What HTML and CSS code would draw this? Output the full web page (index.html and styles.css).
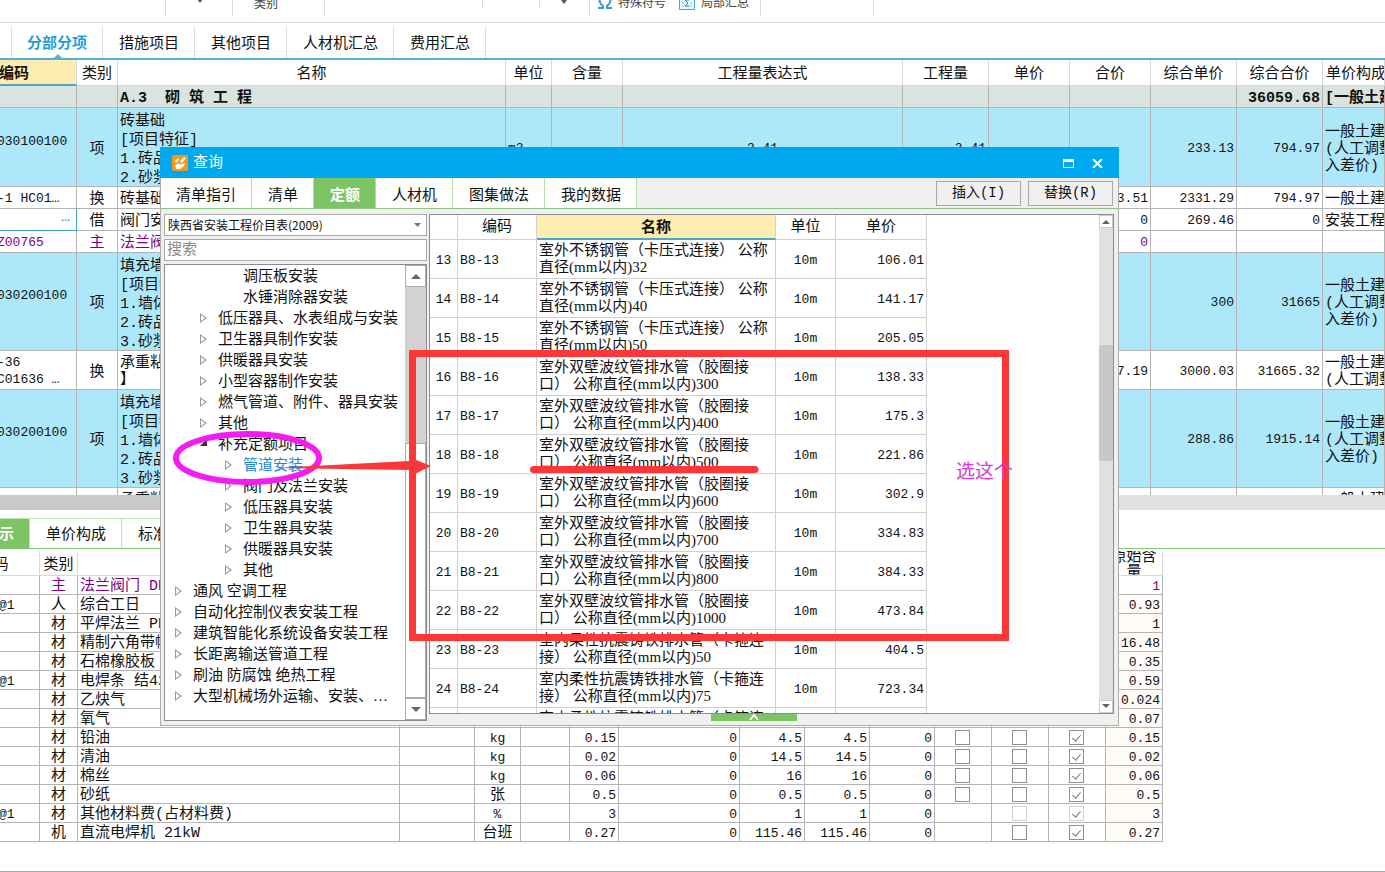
FILE: index.html
```html
<!DOCTYPE html>
<html lang="zh-CN">
<head>
<meta charset="utf-8">
<title>查询</title>
<link rel="stylesheet" href="styles.css">
</head>
<body>
<main class="app">
  <header class="ribbon">
    <div class="rib r1"></div>
    <div class="rib r2"><svg width="8" height="5" viewBox="0 0 8 5"><path d="M1 0h6L4 4z" fill="#555"/></svg></div>
    <div class="rib r3"><span>类别</span></div>
    <div class="rib r4 short"></div>
    <div class="rib r5 short"></div>
    <div class="rib r6"><svg width="8" height="5" viewBox="0 0 8 5"><path d="M1 1h6L4 5z" fill="#555"/></svg></div>
    <div class="rib r7">
      <svg width="14" height="16" viewBox="0 0 14 16"><path d="M0 14h5v-2C2.500 10 1.500 8 1.500 6a5.500 5 0 0 1 11 0c0 2-1 4-3.500 6v2h5" fill="none" stroke="#3b9bd0" stroke-width="2"/></svg>
      <span>特殊符号</span>
      <svg class="sum" width="16" height="16" viewBox="0 0 16 16"><path d="M.5.5h15v15H.5z" fill="#e9f8fc" stroke="#3aaecb"/><path d="M3 5h10M3 9h2M11 9h2M3 12h2M11 12h2" stroke="#7cc4dc"/><path d="M10 6H6l3 3-3 3h4" fill="none" stroke="#2b7fa8"/></svg>
      <span>局部汇总</span>
    </div>
    <div class="rib r8"></div>
  </header>

  <nav class="doctabs">
    <button class="active">分部分项</button><button>措施项目</button><button>其他项目</button><button>人材机汇总</button><button>费用汇总</button>
  </nav>

  <section class="upper">
    <table class="grid main">
      <colgroup><col class="m1"><col class="m2"><col class="m3"><col class="m4"><col class="m5"><col class="m6"><col class="m7"><col class="m8"><col class="m8"><col class="m7"><col class="m7"><col></colgroup>
      <thead><tr><th class="sel">编码</th><th>类别</th><th>名称</th><th>单位</th><th>含量</th><th>工程量表达式</th><th>工程量</th><th>单价</th><th>合价</th><th>综合单价</th><th>综合合价</th><th class="l">单价构成文件</th></tr></thead>
      <tbody>
      <tr class="group"><td></td><td></td><td class="pre">A.3  砌 筑 工 程</td><td></td><td></td><td></td><td></td><td></td><td></td><td></td><td class="r">36059.68</td><td>[一般土建工程]</td></tr>
      <tr class="item"><td class="code up">030100100</td><td class="c">项</td><td class="name"><div>砖基础<br>[项目特征]<br>1.砖品种<br>2.砂浆强度</div></td><td class="n">m3</td><td></td><td class="n c">3.41</td><td class="n r">3.41</td><td></td><td></td><td class="n r">233.13</td><td class="n r">794.97</td><td>一般土建工程<br>(人工调整计<br>入差价)</td></tr>
      <tr class="one"><td class="code">-1 HC01…</td><td class="c">换</td><td>砖基础</td><td></td><td></td><td></td><td></td><td></td><td class="n r">683.51</td><td class="n r">2331.29</td><td class="n r">794.97</td><td>一般土建工程</td></tr>
      <tr class="one"><td class="cur">…</td><td class="c">借</td><td>阀门安装</td><td></td><td></td><td></td><td></td><td></td><td class="n r">0</td><td class="n r">269.46</td><td class="n r">0</td><td>安装工程</td></tr>
      <tr class="one purple"><td class="code">Z00765</td><td class="c">主</td><td>法兰阀门</td><td></td><td></td><td></td><td></td><td></td><td class="n r">0</td><td></td><td></td><td></td></tr>
      <tr class="item"><td class="code up">030200100</td><td class="c">项</td><td class="name"><div>填充墙<br>[项目特征]<br>1.墙体类型<br>2.砖品种<br>3.砂浆强度</div></td><td></td><td></td><td></td><td></td><td></td><td></td><td class="n r">300</td><td class="n r">31665</td><td>一般土建工程<br>(人工调整计<br>入差价)</td></tr>
      <tr class="two"><td class="code">-36<br>C01636 …</td><td class="c">换</td><td>承重粘土砖<br>】</td><td></td><td></td><td></td><td></td><td></td><td class="n r">317.19</td><td class="n r">3000.03</td><td class="n r">31665.32</td><td>一般土建工程<br>(人工调整计</td></tr>
      <tr class="item"><td class="code up">030200100</td><td class="c">项</td><td class="name"><div>填充墙<br>[项目特征]<br>1.墙体类型<br>2.砖品种<br>3.砂浆强度</div></td><td></td><td></td><td></td><td></td><td></td><td></td><td class="n r">288.86</td><td class="n r">1915.14</td><td>一般土建工程<br>(人工调整计<br>入差价)</td></tr>
      <tr class="two"><td></td><td></td><td>承重粘土砖<br>】</td><td></td><td></td><td></td><td></td><td></td><td></td><td></td><td></td><td>一般土建工程<br>(人工调整计</td></tr>
      </tbody>
    </table>
  </section>
  <div class="hscroll"><div class="hthumb"></div></div>

  <section class="lower">
    <nav class="subtabs"><button class="active">工料机显示</button><button>单价构成</button><button>标准换算</button></nav>
    <table class="grid res">
      <colgroup><col class="b1"><col class="b2"><col class="b3"><col class="b4"><col class="b5"><col class="b6"><col class="b6"><col class="b7"><col class="b8"><col class="b8"><col class="b8"><col class="b9"><col class="b9"><col class="b9"><col class="b9"></colgroup>
      <thead><tr><th>编码</th><th>类别</th><th>名称</th><th></th><th></th><th></th><th></th><th></th><th></th><th></th><th></th><th></th><th></th><th></th><th class="wrap"><div>原始含量</div></th></tr></thead>
      <tbody>
      <tr class="purple"><td></td><td class="c">主</td><td>法兰阀门 DN50</td><td colspan="11"></td><td class="n r">1</td></tr>
      <tr><td class="code">@1</td><td class="c">人</td><td>综合工日</td><td colspan="11"></td><td class="n r q">0.93</td></tr>
      <tr><td></td><td class="c">材</td><td>平焊法兰 PN1.6</td><td colspan="11"></td><td class="n r q">1</td></tr>
      <tr><td></td><td class="c">材</td><td>精制六角带帽螺栓</td><td colspan="11"></td><td class="n r q">16.48</td></tr>
      <tr><td></td><td class="c">材</td><td>石棉橡胶板</td><td colspan="11"></td><td class="n r q">0.35</td></tr>
      <tr><td class="code">@1</td><td class="c">材</td><td>电焊条 结422</td><td colspan="11"></td><td class="n r q">0.59</td></tr>
      <tr><td></td><td class="c">材</td><td>乙炔气</td><td colspan="11"></td><td class="n r q">0.024</td></tr>
      <tr><td></td><td class="c">材</td><td>氧气</td><td></td><td></td><td></td><td></td><td></td><td></td><td></td><td></td><td></td><td></td><td></td><td class="n r q">0.07</td></tr>
      <tr><td></td><td class="c">材</td><td>铅油</td><td></td><td class="n c">kg</td><td></td><td class="n r">0.15</td><td class="n r">0</td><td class="n r">4.5</td><td class="n r">4.5</td><td class="n r">0</td><td class="k"><input type="checkbox" aria-label="铅油 选项一"></td><td class="k"><input type="checkbox" aria-label="铅油 选项二"></td><td class="k"><input type="checkbox" aria-label="铅油 选项三" checked></td><td class="n r q">0.15</td></tr>
      <tr><td></td><td class="c">材</td><td>清油</td><td></td><td class="n c">kg</td><td></td><td class="n r">0.02</td><td class="n r">0</td><td class="n r">14.5</td><td class="n r">14.5</td><td class="n r">0</td><td class="k"><input type="checkbox" aria-label="清油 选项一"></td><td class="k"><input type="checkbox" aria-label="清油 选项二"></td><td class="k"><input type="checkbox" aria-label="清油 选项三" checked></td><td class="n r q">0.02</td></tr>
      <tr><td></td><td class="c">材</td><td>棉丝</td><td></td><td class="n c">kg</td><td></td><td class="n r">0.06</td><td class="n r">0</td><td class="n r">16</td><td class="n r">16</td><td class="n r">0</td><td class="k"><input type="checkbox" aria-label="棉丝 选项一"></td><td class="k"><input type="checkbox" aria-label="棉丝 选项二"></td><td class="k"><input type="checkbox" aria-label="棉丝 选项三" checked></td><td class="n r q">0.06</td></tr>
      <tr><td></td><td class="c">材</td><td>砂纸</td><td></td><td class="c">张</td><td></td><td class="n r">0.5</td><td class="n r">0</td><td class="n r">0.5</td><td class="n r">0.5</td><td class="n r">0</td><td class="k"><input type="checkbox" aria-label="砂纸 选项一"></td><td class="k"><input type="checkbox" aria-label="砂纸 选项二"></td><td class="k"><input type="checkbox" aria-label="砂纸 选项三" checked></td><td class="n r q">0.5</td></tr>
      <tr><td class="code">@1</td><td class="c">材</td><td>其他材料费(占材料费)</td><td></td><td class="n c">%</td><td></td><td class="n r">3</td><td class="n r">0</td><td class="n r">1</td><td class="n r">1</td><td class="n r">0</td><td></td><td class="k"><input type="checkbox" aria-label="其他材料费 选项二" disabled></td><td class="k"><input type="checkbox" aria-label="其他材料费 选项三" checked disabled></td><td class="n r q">3</td></tr>
      <tr><td></td><td class="c">机</td><td>直流电焊机 21kW</td><td></td><td class="c">台班</td><td></td><td class="n r">0.27</td><td class="n r">0</td><td class="n r">115.46</td><td class="n r">115.46</td><td class="n r">0</td><td></td><td class="k"><input type="checkbox" aria-label="直流电焊机 选项二"></td><td class="k"><input type="checkbox" aria-label="直流电焊机 选项三" checked></td><td class="n r q">0.27</td></tr>
      </tbody>
    </table>
  </section>
</main>

<section class="dialog" role="dialog" aria-labelledby="dlg-title">
  <header class="titlebar">
    <svg width="16" height="16" viewBox="0 0 16 16"><rect width="16" height="16" rx="2" fill="#f39a1e"/><path d="M3 6l3-3 1 2-3 3zM8 6l4-4 2 1-4 5zM3 10l5-2-1 2 6-2-1 3-4 3-4 0z" fill="#fff"/></svg>
    <h1 id="dlg-title">查询</h1>
    <button aria-label="最大化"><svg width="11" height="9" viewBox="0 0 11 9"><path d="M.5.5h10v8H.5z" fill="none" stroke="#fff"/><path d="M0 0h11v3H0z" fill="#fff"/></svg></button>
    <button aria-label="关闭"><svg width="11" height="9" viewBox="0 0 11 9"><path d="M1 0l9 9M10 0L1 9" stroke="#fff" stroke-width="2"/></svg></button>
  </header>
  <div class="toolbar">
    <nav class="qtabs"><button>清单指引</button><button>清单</button><button class="active">定额</button><button>人材机</button><button>图集做法</button><button>我的数据</button></nav>
    <div class="acts"><button>插入(I)</button><button>替换(R)</button></div>
  </div>
  <div class="panes">
    <div class="side">
      <label class="combo"><select aria-label="定额库"><option>陕西省安装工程价目表(2009)</option></select><svg width="7" height="4" viewBox="0 0 7 4"><path d="M0 0h7L3.500 4z" fill="#777"/></svg></label>
      <input class="search" type="text" placeholder="搜索" aria-label="搜索">
      <div class="treebox">
        <ul class="tree">
          <li class="d3 leaf">调压板安装</li>
          <li class="d3 leaf">水锤消除器安装</li>
          <li class="d2">低压器具、水表组成与安装</li>
          <li class="d2">卫生器具制作安装</li>
          <li class="d2">供暖器具安装</li>
          <li class="d2">小型容器制作安装</li>
          <li class="d2">燃气管道、附件、器具安装</li>
          <li class="d2">其他</li>
          <li class="d2 open">补充定额项目</li>
          <li class="d3 picked">管道安装</li>
          <li class="d3">阀门及法兰安装</li>
          <li class="d3">低压器具安装</li>
          <li class="d3">卫生器具安装</li>
          <li class="d3">供暖器具安装</li>
          <li class="d3">其他</li>
          <li class="d1">通风 空调工程</li>
          <li class="d1">自动化控制仪表安装工程</li>
          <li class="d1">建筑智能化系统设备安装工程</li>
          <li class="d1">长距离输送管道工程</li>
          <li class="d1">刷油 防腐蚀 绝热工程</li>
          <li class="d1">大型机械场外运输、安装、…</li>
        </ul>
        <div class="vscroll wide"><button aria-label="向上"><svg width="10" height="5" viewBox="0 0 10 5"><path d="M0 5l5-5 5 5z" fill="#666"/></svg></button><i class="gap"></i><i class="thumb"></i><button aria-label="向下"><svg width="10" height="5" viewBox="0 0 10 5"><path d="M0 0l5 5 5-5z" fill="#666"/></svg></button></div>
      </div>
    </div>
    <div class="list">
      <div class="rows">
        <table class="grid quota">
          <colgroup><col class="q1"><col class="q2"><col class="q3"><col class="q4"><col class="q5"></colgroup>
          <thead><tr><th></th><th>编码</th><th class="sel">名称</th><th>单位</th><th>单价</th></tr></thead>
          <tbody>
          <tr><td class="n c">13</td><td class="n">B8-13</td><td class="mix">室外不锈钢管（卡压式连接） 公称<br>直径(mm以内)32</td><td class="n c">10m</td><td class="n r">106.01</td></tr>
          <tr><td class="n c">14</td><td class="n">B8-14</td><td class="mix">室外不锈钢管（卡压式连接） 公称<br>直径(mm以内)40</td><td class="n c">10m</td><td class="n r">141.17</td></tr>
          <tr><td class="n c">15</td><td class="n">B8-15</td><td class="mix">室外不锈钢管（卡压式连接） 公称<br>直径(mm以内)50</td><td class="n c">10m</td><td class="n r">205.05</td></tr>
          <tr><td class="n c">16</td><td class="n">B8-16</td><td class="mix">室外双壁波纹管排水管（胶圈接<br>口） 公称直径(mm以内)300</td><td class="n c">10m</td><td class="n r">138.33</td></tr>
          <tr><td class="n c">17</td><td class="n">B8-17</td><td class="mix">室外双壁波纹管排水管（胶圈接<br>口） 公称直径(mm以内)400</td><td class="n c">10m</td><td class="n r">175.3</td></tr>
          <tr><td class="n c">18</td><td class="n">B8-18</td><td class="mix">室外双壁波纹管排水管（胶圈接<br>口） 公称直径(mm以内)500</td><td class="n c">10m</td><td class="n r">221.86</td></tr>
          <tr><td class="n c">19</td><td class="n">B8-19</td><td class="mix">室外双壁波纹管排水管（胶圈接<br>口） 公称直径(mm以内)600</td><td class="n c">10m</td><td class="n r">302.9</td></tr>
          <tr><td class="n c">20</td><td class="n">B8-20</td><td class="mix">室外双壁波纹管排水管（胶圈接<br>口） 公称直径(mm以内)700</td><td class="n c">10m</td><td class="n r">334.83</td></tr>
          <tr><td class="n c">21</td><td class="n">B8-21</td><td class="mix">室外双壁波纹管排水管（胶圈接<br>口） 公称直径(mm以内)800</td><td class="n c">10m</td><td class="n r">384.33</td></tr>
          <tr><td class="n c">22</td><td class="n">B8-22</td><td class="mix">室外双壁波纹管排水管（胶圈接<br>口） 公称直径(mm以内)1000</td><td class="n c">10m</td><td class="n r">473.84</td></tr>
          <tr><td class="n c">23</td><td class="n">B8-23</td><td class="mix">室内柔性抗震铸铁排水管（卡箍连<br>接） 公称直径(mm以内)50</td><td class="n c">10m</td><td class="n r">404.5</td></tr>
          <tr><td class="n c">24</td><td class="n">B8-24</td><td class="mix">室内柔性抗震铸铁排水管（卡箍连<br>接） 公称直径(mm以内)75</td><td class="n c">10m</td><td class="n r">723.34</td></tr>
          <tr><td></td><td></td><td class="mix">室内柔性抗震铸铁排水管（卡箍连<br>接）</td><td></td><td></td></tr>
          </tbody>
        </table>
      </div>
      <div class="vscroll"><button aria-label="向上"><svg width="8" height="4" viewBox="0 0 8 4"><path d="M0 4l4-4 4 4z" fill="#666"/></svg></button><i class="gap"></i><i class="thumb"></i><i class="rest"></i><button aria-label="向下"><svg width="8" height="4" viewBox="0 0 8 4"><path d="M0 0l4 4 4-4z" fill="#666"/></svg></button></div>
    </div>
  </div>
  <button class="fold" aria-label="展开"><svg width="10" height="6" viewBox="0 0 10 6"><path d="M1 6l4-5 4 5" fill="none" stroke="#fff" stroke-width="2"/></svg></button>
</section>

<svg class="marks" width="1385" height="872" viewBox="0 0 1385 872">
  <rect x="412.500" y="353.500" width="593" height="284" fill="none" stroke="#fb3837" stroke-width="7"/>
  <ellipse cx="247.500" cy="458" rx="71.500" ry="24" fill="none" stroke="#f41bf4" stroke-width="6"/>
  <path d="M273 468L409 461V457L431 466L411 476V470Z" fill="#fb3837"/>
  <path d="M533.500 469.500H755" stroke="#fb3837" stroke-width="7" stroke-linecap="round"/>
</svg>
<p class="note">选这个</p>
</body>
</html>
```
FILE: styles.css
```css
* { box-sizing: border-box; }
body {
  margin: 0;
  height: 100vh;
  overflow: hidden;
  background: #fff;
  color: #111;
  font: 15px/17px "Liberation Mono", "Noto Sans CJK SC", monospace;
}
button, input, select { font: inherit; color: inherit; margin: 0; padding: 0; border: 0; background: none; border-radius: 0; }
h1, p, ul { margin: 0; padding: 0; }
svg { display: block; flex: none; }
.app { display: flex; flex-direction: column; height: 100vh; border-bottom: 1px solid #aaa; overflow: hidden; }

/* ribbon */
.ribbon { display: flex; flex: none; height: 23px; border-bottom: 1px solid #dcdcdc; font-size: 12px; line-height: 14px; color: #444; overflow: hidden; }
.rib { display: flex; align-items: flex-start; flex: none; height: 16px; border-right: 1px solid #dcdcdc; }
.rib.short { height: 8px; }
.rib > span { margin-top: -3px; }
.rib > svg { margin-top: -1px; }
.r1 { width: 166px; }
.r2 { width: 67px; padding-left: 30px; }
.r3 { width: 92px; padding-left: 21px; }
.r3 > span { margin-top: -2px; }
.r4 { width: 158px; }
.r5 { width: 57px; }
.r6 { width: 50px; padding-left: 20px; }
.r7 { width: 171px; padding-left: 8px; gap: 6px; }
.r7 > svg { margin-top: -6px; }
.r7 .sum { margin-left: 7px; }
.r8 { width: 113px; }

/* document tabs */
.doctabs { display: flex; flex: none; height: 37px; padding-top: 4px; padding-left: 11px; border-bottom: 2px solid #4fb0d8; }
.doctabs button { position: relative; padding: 3px 15px 0 16px; border-right: 1px solid #ddd; }
.doctabs .active { padding: 3px 15px 0; border-left: 1px solid #ddd; color: #1e9fdc; font-weight: bold; }
.doctabs .active::after { content: ""; position: absolute; left: 42px; bottom: 0; border: 4px solid transparent; border-top: 0; border-bottom-color: #4fb0d8; }

/* tables */
.grid { table-layout: fixed; border-spacing: 0; }
.grid th, .grid td { padding: 0 2px; border-right: 1px solid #b4b4b4; border-bottom: 1px solid #b4b4b4; white-space: nowrap; overflow: hidden; text-align: left; vertical-align: middle; }
.grid th { font-weight: normal; text-align: center; border-color: #d8d8d8; }
.grid .c { text-align: center; }
.grid .r { text-align: right; }
.grid .n, .grid .code { font-size: 13px; }
.grid .l { text-align: left; padding-left: 3px; }
.grid .sel { background: #feecb0; font-weight: bold; border-bottom: 2px solid #4ea5c8; }
.purple { color: #800080; }

.upper { flex: none; height: 435px; overflow: hidden; }
.main { width: calc(100% + 48px); margin-left: -48px; }
.m1 { width: 125px; } .m2 { width: 41px; } .m3 { width: 388px; } .m4 { width: 46px; } .m5 { width: 71px; } .m6 { width: 280px; } .m7 { width: 86px; } .m8 { width: 81px; }
.main th { height: 26px; }
.grid.main th, .grid.main td { padding-top: 4px; }
.grid.main .n, .grid.main .code { padding-top: 2px; }
.main .code { padding-left: 45px; }
.main .up { padding-bottom: 14px; }
.group td { height: 22px; background: #dbe3df; font-weight: bold; }
.grid .pre { white-space: pre; }
.item td { background: #ace8fa; }
.name div { margin-bottom: -2px; line-height: 19px; }
.one td { height: 22px; }
.two td { height: 39px; }
.grid.main .cur { padding: 0 6px 4px 2px; border: 1px solid #3fa3c0; border-left: 0; border-top: 0; text-align: right; color: #1e86c0; }

.hscroll { flex: none; height: 15px; background: #e0e0e0; }
.hthumb { width: 50%; height: 15px; background: #c9c9c9; }

/* resource panel */
.lower { flex: 1; padding-top: 8px; overflow: hidden; }
.subtabs { display: flex; height: 31px; margin-left: -77px; border-bottom: 1px solid #86c47a; }
.subtabs button { padding: 4px 15px 0 16px; border: 1px solid #c0e2b8; border-left: 0; border-bottom: 0; }
.subtabs .active { background: #7dc466; color: #fff; font-weight: bold; }
.res { width: 1215px; margin: 2px 0 0 -52px; }
.b1 { width: 92px; } .b2 { width: 38px; } .b3 { width: 322px; } .b4 { width: 75px; } .b5 { width: 46px; } .b6 { width: 49px; } .b7 { width: 121px; } .b8 { width: 65px; } .b9 { width: 57px; }
.grid.res th { height: 25px; padding-top: 4px; }
.grid.res .wrap { padding: 0 3px; white-space: normal; }
.wrap div { margin: -1px 0 -5px; line-height: 15px; }
.grid.res td { height: 19px; padding-top: 3px; line-height: 15px; }
.grid.res .code { padding-left: 51px; }
.grid.res .k { padding: 0 3px 0 2px; }
.res .q { background: #fefaf6; }
input[type="checkbox"] { appearance: none; display: block; width: 15px; height: 15px; margin: 0 auto; border: 1px solid #8f8f8f; background: #fff; }
input[type="checkbox"]:checked::after { content: ""; display: block; width: 4px; height: 7px; margin: 2px 0 0 4px; border: solid #777; border-width: 0 1px 1px 0; transform: rotate(40deg); }
input[type="checkbox"]:disabled { border-color: #d2d2d2; }

/* query window */
.dialog { position: absolute; left: 160px; top: 147px; display: flex; flex-direction: column; width: 959px; height: 579px; background: #f0f0f0; border: 1px solid #a9adb0; border-top-color: #3a93bd; }
.titlebar { display: flex; align-items: center; flex: none; height: 30px; margin: 0 -1px; padding: 0 16px 0 12px; background: #00a8f0; color: #fff; }
.titlebar h1 { flex: 1; margin-left: 5px; font-size: 15px; font-weight: normal; }
.titlebar button { padding: 4px 0; margin-left: 18px; }
.toolbar { display: flex; justify-content: space-between; flex: none; height: 31px; border-bottom: 1px solid #8cc481; }
.qtabs { display: flex; }
.qtabs button { padding: 6px 15px 0 16px; background: #fff; border-right: 1px solid #b5dfa8; }
.qtabs button:first-child { padding-left: 15px; }
.qtabs .active { background: #7dc466; color: #fff; font-weight: bold; }
.acts { display: flex; gap: 7px; padding: 3px 5px 2px 0; }
.acts button { width: 85px; border: 1px solid #a8a8a8; background: #f0f0f0; font-size: 14px; }
.panes { display: flex; flex: 1; min-height: 0; gap: 2px; padding: 4px 4px 4px 3px; border-top: 1px solid #e4f3df; }
.side { display: flex; flex-direction: column; flex: none; width: 263px; gap: 3px; }
.combo { display: flex; align-items: center; flex: none; height: 22px; padding-right: 5px; border: 1px solid #a9a9a9; background: #fff; }
.combo select { appearance: none; flex: 1; padding-left: 3px; font: 12px/18px "Noto Sans CJK SC", sans-serif; outline: none; }
.search { flex: none; height: 22px; padding: 0 2px; border: 1px solid #a9a9a9; background: #fff; }
.search::placeholder { color: #8a8a8a; opacity: 1; }
.treebox { display: flex; flex: 1; min-height: 0; border: 1px solid #888d94; background: #fff; overflow: hidden; }
.tree { flex: 1; list-style: none; padding-top: 1px; font-family: "Liberation Serif", "Noto Sans CJK SC", serif; }
.tree li { display: flex; height: 21px; line-height: 21px; white-space: nowrap; }
.tree li::before { content: ""; width: 7px; height: 10px; margin: 5px 11px 0 0; background: #999; clip-path: polygon(0 0, 100% 50%, 0 100%, 0 0, 1px 2px, 1px 8px, 5px 50%, 1px 2px); }
.tree .leaf::before { visibility: hidden; }
.tree .open::before { background: #333; clip-path: polygon(100% 0, 100% 70%, 0 70%); }
.d1 { padding-left: 10px; } .d2 { padding-left: 35px; } .d3 { padding-left: 60px; }
.picked { color: #1c87e0; }
.vscroll { display: flex; flex-direction: column; flex: none; width: 14px; background: #e0e0e0; }
.vscroll button { display: flex; align-items: center; justify-content: center; flex: none; height: 13px; background: #fff; border: 1px solid #ccc; }
.vscroll .gap { flex: 117; }
.vscroll .thumb { flex: 117; background: #c8c8c8; border-radius: 2px; }
.vscroll .rest { flex: 240; }
.vscroll.wide { width: 21px; background: #d2d2d2; }
.vscroll.wide button { height: 22px; border-color: #aaa; }
.vscroll.wide .gap { flex: 158; }
.vscroll.wide .thumb { flex: 256; background: #fff; border: 1px solid #aaa; border-radius: 0; }
.list { display: flex; flex: 1; min-width: 0; margin-bottom: 7px; border: 1px solid #8a8d99; background: #fff; overflow: hidden; }
.rows { flex: 1; min-width: 0; overflow: hidden; }
.quota { width: 497px; }
.q1 { width: 28px; } .q2 { width: 79px; } .q3 { width: 239px; } .q4 { width: 60px; } .q5 { width: 91px; }
.quota th, .quota td { border-color: #d0d0d0; }
.grid.quota th { height: 25px; padding-top: 1px; }
.grid.quota .sel { padding-top: 3px; }
.quota td { height: 39px; }
.grid.quota .n { padding-top: 2px; }
.grid .mix { font-family: "Liberation Serif", "Noto Sans CJK SC", serif; }
.fold { position: absolute; left: 550px; bottom: 4px; display: flex; justify-content: center; width: 86px; height: 7px; background: #7dc466; }

/* annotations */
.marks { position: absolute; left: 0; top: 0; pointer-events: none; }
.note { position: absolute; left: 956px; top: 458px; color: #d936e0; font: 19px/24px "Noto Sans CJK SC", sans-serif; }
```
